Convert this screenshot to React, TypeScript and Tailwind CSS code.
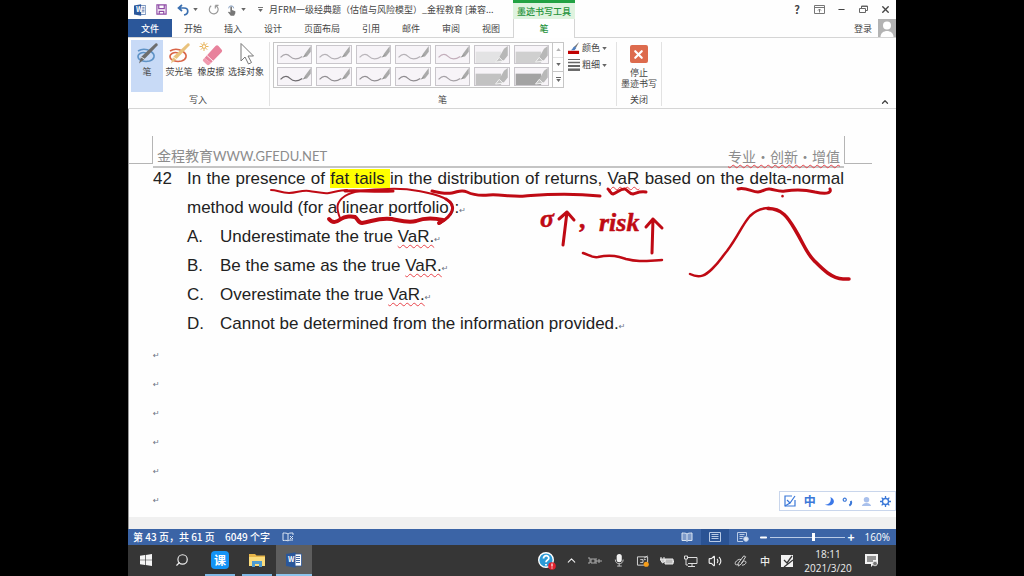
import type { ReactNode } from "react";
import { ChevronUp, Minus, Search, Settings, Volume2, X } from "lucide-react";

const tabs = ["开始", "插入", "设计", "页面布局", "引用", "邮件", "审阅", "视图"];

const options = [
  { letter: "A.", text: "Underestimate the true ", term: "VaR." },
  { letter: "B.", text: "Be the same as the true ", term: "VaR." },
  { letter: "C.", text: "Overestimate the true ", term: "VaR." },
  { letter: "D.", text: "Cannot be determined from the information provided.", term: "" },
];

// the gallery shows seven pens a row, the last two are highlighters
const pens = [
  "#a9a5aa", "#b5b1b6", "#b9b5ba", "#b5b1b6", "#c3aebb", "#e3e3e4", "#cfcfcf",
  "#6f6c70", "#918e92", "#918e92", "#8f8c90", "#a5a1a6", "#c2c2c2", "#a3a3a3",
];

function Caret() {
  return (
    <svg viewBox="0 0 6 4" className="h-[3px] w-[5px]" fill="#666">
      <path d="M0 0h6L3 4z" />
    </svg>
  );
}

function Mark() {
  return (
    <span className="font-['DejaVu_Sans'] text-[8px] leading-none text-gray-500" aria-hidden="true">
      ↵
    </span>
  );
}

function Term({ children }: { children: ReactNode }) {
  return (
    <span className="underline decoration-[#e8434a] decoration-wavy decoration-1 underline-offset-2">
      {children}
    </span>
  );
}

function WordLogo({ className }: { className: string }) {
  return (
    <span className={`relative flex items-center ${className}`}>
      <svg viewBox="0 0 16 16" className="h-full w-full">
        <path d="M8 2h7.5v12H8z" fill="#fff" stroke="#2b579a" strokeWidth=".8" />
        <path d="M10 4.5h4M10 6.5h4M10 8.5h4M10 10.5h4" stroke="#2b579a" strokeWidth=".9" />
        <path d="M0 2 9.5.3v15.4L0 14z" fill="#2b579a" />
      </svg>
      <span className="absolute left-0.5 text-[7px] leading-none font-bold text-white">W</span>
    </span>
  );
}

function PenIcon({ body, loop }: { body: string; loop: string }) {
  return (
    <svg viewBox="0 0 24 24" className="h-6 w-6" fill="none">
      <path
        d="M3 9c4-2.500 9-2 13 .5 5 3.500 3.500 8-1.500 9.500-5 1.300-11-.5-11.500-4C2.700 12 7 9.500 11 11"
        stroke={loop}
        strokeWidth="1.600"
      />
      <path d="M20.500 1.500c1.500-.7 2.700.5 2 2L9.500 17 6 15z" fill={body} />
      <path d="m6 15 3.500 2L4 21.500z" fill={body} />
      <path d="m6 15 3.500 2" stroke="#fff" strokeWidth=".7" />
    </svg>
  );
}

function PenSample({ color, marker }: { color: string; marker: boolean }) {
  return (
    <svg viewBox="0 0 34 18" className="h-full w-full" fill="none">
      {marker ? (
        <>
          <path d="M0 6h27v12H0z" fill={color} />
          <path d="m21 17 4-5 5-9 4-3v10l-4 5z" fill="#b8b8b8" />
          <path d="m21 17 4-5 4 4z" fill="#c4c4c4" stroke="#f3f3f3" />
        </>
      ) : (
        <>
          <path d="M2 12c4-4 7-4 10-1s7 4 13 0" stroke={color} strokeWidth="1.300" />
          <path d="m26 12 2-4 6-8v6l-4 5z" fill="#aaa" />
          <path d="m26 12 3-3" stroke="#888" />
        </>
      )}
    </svg>
  );
}

function TitleBar() {
  return (
    <div className="flex h-[19px] items-center text-[#444]">
      <div className="flex w-[141px] shrink-0 items-center pl-1.5">
        <WordLogo className="h-3 w-3" />
        <button aria-label="保存" className="ml-2.5">
          <svg viewBox="0 0 12 12" className="h-[11px] w-[11px]" fill="none" stroke="#8e4aa5" strokeWidth="1.300">
            <path d="M1 1h10v10H1zM3 1v4h6V1M3.500 11V8h5v3" />
          </svg>
        </button>
        <button aria-label="撤消" className="ml-2.5 flex items-center gap-1">
          <svg viewBox="0 0 12 12" className="h-3 w-3" fill="none" stroke="#3a6fb0" strokeWidth="1.700">
            <path d="M5 1 1.500 4 5 7M1.500 4H7c5 0 5 6 0 7" />
          </svg>
          <Caret />
        </button>
        <button aria-label="恢复" className="ml-2.5">
          <svg viewBox="0 0 12 12" className="h-[11px] w-[11px]" fill="none" stroke="#999" strokeWidth="1.300">
            <path d="M8 1.500A4.800 4.800 0 1 1 3.500 2M8 1.500V5M8 1.500h3.500" />
          </svg>
        </button>
        <button aria-label="触摸模式" className="ml-2 flex items-center gap-1">
          <svg viewBox="0 0 12 14" className="h-3 w-2.5" fill="#777">
            <path d="M4 4c0-2 2-2 2 0v3l4 1.500V11l-1.500 3h-4L1 9.500 2.500 9 4 10z" />
            <path d="M2 5a3 3 0 1 1 6 0" fill="none" stroke="#8ba3c4" strokeWidth="1.200" />
          </svg>
          <Caret />
        </button>
        <button aria-label="自定义" className="ml-3 flex flex-col items-center gap-px">
          <span className="h-px w-[5px] bg-[#777]" />
          <Caret />
        </button>
      </div>
      <h1 className="w-[244px] shrink-0 whitespace-nowrap">月FRM一级经典题（估值与风险模型）_金程教育 [兼容...</h1>
      <div className="flex h-full w-[62px] shrink-0 items-center justify-center border-t-[3px] border-[#22a243] bg-[#dff3df] font-medium whitespace-nowrap text-[#26923c]">
        墨迹书写工具
      </div>
      <div className="ml-auto flex *:flex *:w-[22px] *:items-center *:justify-center">
        <button aria-label="帮助" className="text-[11px] font-bold">?</button>
        <button aria-label="功能区显示选项">
          <svg viewBox="0 0 11 9" className="h-[9px] w-[11px]" fill="none" stroke="#777">
            <path d="M.5.5h10v8H.5zM.5 2.500h10M5.500 7.500V4M4 5.500 5.500 4 7 5.500" />
          </svg>
        </button>
        <button aria-label="最小化"><Minus size={9} strokeWidth={3} /></button>
        <button aria-label="还原">
          <svg viewBox="0 0 9 9" className="h-[9px] w-[9px]" fill="none" stroke="#666">
            <path d="M.5 3.500h6v4h-6zM2.500 3V1h6v4.500H7M2.500 1.500h6" />
          </svg>
        </button>
        <button aria-label="关闭"><X size={11} strokeWidth={3} /></button>
      </div>
    </div>
  );
}

function TabRow() {
  return (
    <div className="flex h-[19px] border-b border-[#d5d5d5]">
      <button className="w-11 bg-[#2b579a] font-medium text-white">文件</button>
      <nav className="ml-px flex">
        {tabs.map((tab) => (
          <button key={tab} className="px-[11px]">{tab}</button>
        ))}
      </nav>
      <button className="-mb-px ml-0.5 w-[62px] border-x border-[#d5d5d5] bg-white font-medium text-[#26923c]">笔</button>
      <button className="ml-auto flex items-center gap-1.5">
        登录
        <svg viewBox="0 0 18 18" className="h-[18px] w-[18px]">
          <path d="M0 0h18v18H0z" fill="#b3b3b3" />
          <circle cx="9" cy="6.500" r="4" fill="#fff" />
          <path d="M2.500 18c0-8 13-8 13 0z" fill="#fff" />
        </svg>
      </button>
    </div>
  );
}

function Ribbon() {
  return (
    <div className="flex h-[71px] border-b border-[#d5d5d5] pt-0.5 leading-3">
      <section className="flex w-[141px] flex-col pl-[3px]">
        <div className="flex h-[52px] *:flex *:flex-col *:items-center *:pt-0.5">
          <button className="w-8 bg-[#c8daf6]">
            <PenIcon body="#6d6d6d" loop="#5f93c6" />笔
          </button>
          <button className="w-8 whitespace-nowrap">
            <PenIcon body="#e9c27c" loop="#d96547" />荧光笔
          </button>
          <button className="w-8 whitespace-nowrap">
            <svg viewBox="0 0 24 24" className="h-6 w-6">
              <path d="m5.500 16 11-12c1-1 2-1 3 0l3 3.500c1 1 .8 1.800 0 2.700L12 21z" fill="#e8829c" />
              <path d="m5.500 16 6.500 5-1.500 1.500c-1 1-1.800 1-2.800 0L4.500 19.500c-1-1-.8-1.700 0-2.500z" fill="#f09bb0" />
              <path d="M8 13.500 14 19" stroke="#fff" strokeWidth=".9" />
              <path d="M5 0v9M.5 4.500h9M1.800 1.300l6.400 6.400M8.200 1.300 1.800 7.700" stroke="#e9b45a" />
              <circle cx="5" cy="4.500" r="1.800" fill="#fff" stroke="#e9b45a" />
            </svg>
            橡皮擦
          </button>
          <button className="w-[38px] whitespace-nowrap">
            <svg viewBox="0 0 24 24" className="h-6 w-6" fill="#fff" stroke="#777">
              <path d="M7 1.500V19l4-4 3.500 7 3-1.500L14 14h5.500z" />
            </svg>
            选择对象
          </button>
        </div>
        <p className="mt-0.5 pr-1 text-center">写入</p>
      </section>
      <section className="my-0.5 flex w-[347px] shrink-0 flex-col border-l border-[#e2e2e2] pl-[3px]">
        <div className="flex h-[50px] gap-1">
          <div className="flex h-[46px] w-[291px] border border-[#c6c6c6]">
            <div className="grid flex-1 grid-cols-7 gap-x-1 gap-y-[3px] px-[3px] py-0.5">
              {pens.map((color, i) => (
                <button
                  key={i}
                  aria-label={`笔 ${i + 1}`}
                  className="h-[19px] overflow-hidden border border-[#c9c6cb] bg-[#f7f4f8]"
                >
                  <PenSample color={color} marker={i % 7 > 4} />
                </button>
              ))}
            </div>
            <div className="grid w-[11px] grid-rows-3 divide-y divide-[#c6c6c6] border-l border-[#c6c6c6] *:flex *:flex-col *:items-center *:justify-center *:gap-px">
              <button aria-label="上一行" className="opacity-50">
                <svg viewBox="0 0 6 4" className="h-[3px] w-[5px]" fill="#666"><path d="M0 4h6L3 0z" /></svg>
              </button>
              <button aria-label="下一行"><Caret /></button>
              <button aria-label="更多"><span className="h-px w-[5px] bg-[#666]" /><Caret /></button>
            </div>
          </div>
          <div className="flex flex-col gap-[5px]">
            <button className="flex items-center gap-0.5">
              <svg viewBox="0 0 13 13" className="h-3 w-3">
                <path d="M0 9.500h12V13H0z" fill="#c00000" />
                <path d="M12 0 7 5l1.500 1.500z" fill="#777" />
                <path d="m7 4.500 2 2-2 2.500H3c2-1 2-3 4-4.500z" fill="#4f7dbc" />
              </svg>
              颜色 <Caret />
            </button>
            <button className="flex items-center gap-0.5">
              <svg viewBox="0 0 12 12" className="h-3 w-3" stroke="#666">
                <path d="M0 .5h12" />
                <path d="M0 3.500h12" strokeWidth="1.500" />
                <path d="M0 7h12" strokeWidth="2" />
                <path d="M0 10.700h12" strokeWidth="2.500" />
              </svg>
              粗细 <Caret />
            </button>
          </div>
        </div>
        <p className="mt-0.5 pr-1 text-center">笔</p>
      </section>
      <section className="my-0.5 flex w-[46px] flex-col items-center border-x border-[#e2e2e2]">
        <button className="flex h-[50px] flex-col items-center pt-[3px] leading-[11px] whitespace-nowrap">
          <span className="mb-1 flex h-[18px] w-[18px] shrink-0 items-center justify-center rounded-xs bg-[#dd6b4d] text-white">
            <X size={13} strokeWidth={4} />
          </span>
          <span>停止</span>
          <span>墨迹书写</span>
        </button>
        <p className="mt-0.5">关闭</p>
      </section>
      <button aria-label="折叠功能区" className="mt-auto mr-1.5 mb-px ml-auto">
        <ChevronUp size={10} strokeWidth={3} />
      </button>
    </div>
  );
}

function PageHeader() {
  return (
    <div className="flex pt-7">
      <div className="-mt-px h-7 w-6 border-r border-b border-[#b5b5b5]" />
      <div className="flex h-[31px] flex-1 items-end justify-between border-b-2 border-[#c4c4c4] pl-1 text-sm leading-5 text-[#8c8c8c]">
        <p>
          金程教育<span className="font-['Lato'] text-[13px]">WWW.GFEDU.NET</span>
        </p>
        <p className="mr-1">
          <Term>专业・创新・增值</Term>
        </p>
      </div>
      <div className="-mt-px h-7 w-7 border-b border-l border-[#b5b5b5]" />
      <div className="w-6" />
    </div>
  );
}

function Ink() {
  return (
    <svg
      viewBox="129 108 767 421"
      className="pointer-events-none absolute top-0 left-0 w-full"
      fill="none"
      stroke="#bf0a14"
      strokeWidth="2.500"
      strokeLinecap="round"
      strokeLinejoin="round"
    >
      <path d="M271 189c6 0 10 3 18 3s12-3 20-2 14 3 20 2 11-3 18-3" strokeWidth="2" />
      <path d="M345 190c12-1 30 1 48 0" strokeWidth="3" />
      <path d="M340 217c-4-10-4-16 5-22s22-6 43-7c22-1 45 4 56 9 14 7 9 18-4 25" strokeWidth="2" />
      <path d="M446 198c12 7 6 17-6 24" strokeWidth="3" />
      <path d="M329 218c4 5 8 3 12 0s11-3 14-2c3 2 3 6 7 6 9-1 17-6 30-4 10 2 16 4 24 2 10-4 18-3 27-1l-4 3" strokeWidth="4" />
      <path d="M432 190c8 2 14 3 20 2s9-4 15-1 12 4 22 3 22 2 36 1 38-4 75 0" strokeWidth="3" />
      <path d="M608 188c2 2 3 5 5 5 4-1 8-6 12-5 4 2 4 5 8 5 4-1 6-3 13-2" strokeWidth="3" />
      <path d="M738 188c8-2 14 3 20 3 5 0 7-4 12-3 6 1 9 3 15 2 12-2 22-1 30 1 9 2 17 2 15-3" strokeWidth="3" />
      <path d="M782.500 195v.3" />
      <path d="M690 273c10 5 16 1 22-5 9-9 9-11 15-18 12-16 15-26 23-35 6-6 12-8 19-8" />
      <path d="M768 207.500c14 0 20 9 27 21 9 15 11 23 19 31 7 7 17 18 29 18.500h6" strokeWidth="3.500" />
      <path d="m563 244 4-33M559 218l8-7 7 8" strokeWidth="3" />
      <path d="m652 252 1-34M646 226l7-8 9 9" strokeWidth="3" />
      <path d="M583 252c6 2 9 5 15 4 14-3 22 0 28 2 12 3 18 2 36 1" />
      <g
        fill="#bf0a14"
        strokeWidth=".5"
        className="font-['Liberation_Serif'] text-[26px] font-bold italic"
      >
        <text x="540" y="226">σ</text>
        <text x="580" y="227">,</text>
        <text x="599" y="230">risk</text>
      </g>
    </svg>
  );
}

function ImeBar() {
  return (
    <div className="absolute right-0 bottom-[18px] flex h-5 w-[117px] items-center justify-around border border-[#c9d6ec] bg-white text-[#3b78d8]">
      <button aria-label="输入法">
        <svg viewBox="0 0 12 12" className="h-3 w-3" fill="none" stroke="#3b78d8" strokeWidth="1.200">
          <path d="M8 1H1v10h10V5" />
          <path d="m3 5 3 3 5-7M1 11l5-3" />
        </svg>
      </button>
      <button className="text-[12px] leading-none font-bold">中</button>
      <button aria-label="半角">
        <svg viewBox="0 0 12 12" className="h-[11px] w-[11px]" fill="#3b78e8">
          <path d="M7 1c7 3 4 12-6 8.500 5 0 7.500-4 6-8.500z" />
        </svg>
      </button>
      <button aria-label="标点">
        <svg viewBox="0 0 12 12" className="h-[11px] w-[11px]" fill="none" stroke="#3b78d8">
          <circle cx="3" cy="4" r="1.700" strokeWidth="1.300" />
          <path d="M9.500 5.500c1 2 0 4-1.500 5" strokeWidth="2.200" />
        </svg>
      </button>
      <button aria-label="账户">
        <svg viewBox="0 0 12 12" className="h-[11px] w-[11px]" fill="#a9c0ec">
          <circle cx="6" cy="4" r="3" />
          <path d="M1 11c0-2 2-3.500 5-3.500s5 1.500 5 3.500z" />
        </svg>
      </button>
      <button aria-label="设置">
        <svg viewBox="0 0 12 12" className="h-[11px] w-[11px]" fill="none" stroke="#3b78d8">
          <circle cx="6" cy="6" r="3.300" strokeWidth="1.500" />
          <path d="M6 0v2.500M6 9.500V12M0 6h2.500M9.500 6H12M1.800 1.800l1.700 1.700M8.500 8.500l1.700 1.700M10.200 1.800 8.500 3.500M3.500 8.500l-1.700 1.700" strokeWidth="1.400" />
        </svg>
      </button>
    </div>
  );
}

function StatusBar() {
  return (
    <footer className="flex h-4 shrink-0 items-center bg-[#3b64a6] pl-[5px] text-[10px] font-medium text-white">
      <span className="w-[92px] whitespace-nowrap">第 43 页，共 61 页</span>
      <span className="w-[57px] whitespace-nowrap">6049 个字</span>
      <svg viewBox="0 0 12 10" className="h-2.5 w-3" fill="none" stroke="#dbe5f3">
        <path d="M6 9V2C5 1 3 1 1 1v7.500c2 0 4-.5 5 .5 1-1 2-1 5-1M6 2c1-1 2-1 5-1v2M8 4l3 3M11 4 8 7" />
      </svg>
      <div className="ml-auto flex h-full *:flex *:h-full *:w-7 *:items-center *:justify-center">
        <button aria-label="阅读视图">
          <svg viewBox="0 0 12 10" className="h-2.5 w-3" fill="#7f9bc9" stroke="#dbe5f3">
            <path d="M6 9V2C5 1 3 1 1 1v7.500h4L6 9.500l1-1h4V1C9 1 7 1 6 2" />
          </svg>
        </button>
        <button aria-label="页面视图" className="bg-[#2a5394]">
          <svg viewBox="0 0 12 10" className="h-2.5 w-3" fill="none" stroke="#b9cbe6">
            <path d="M.5.5h11v9H.5zM2.500 2.500h7M2.500 4.500h7M2.500 6.500h7" />
          </svg>
        </button>
        <button aria-label="Web 版式视图">
          <svg viewBox="0 0 12 10" className="h-2.5 w-3" fill="none" stroke="#b9cbe6">
            <path d="M6 9.500H.5v-9h9V4M2.500 2.500h5M2.500 4.500h4M2.500 6.500h3" />
            <circle cx="9" cy="7" r="2.300" fill="#dbe5f3" />
          </svg>
        </button>
      </div>
      <button aria-label="缩小" className="ml-0.5"><Minus size={9} strokeWidth={5} /></button>
      <input
        type="range"
        aria-label="缩放"
        min={0}
        max={100}
        defaultValue={58}
        className="mx-0.5 h-2 w-[75px] appearance-none bg-[linear-gradient(#b9cbe6,#b9cbe6)] bg-[length:100%_1px] bg-center bg-no-repeat [&::-webkit-slider-thumb]:h-2 [&::-webkit-slider-thumb]:w-[3px] [&::-webkit-slider-thumb]:appearance-none [&::-webkit-slider-thumb]:bg-white"
      />
      <button aria-label="放大" className="text-[12px] leading-none font-bold">+</button>
      <span className="mr-1.5 ml-2.5 font-['Open_Sans'] font-normal">160%</span>
    </footer>
  );
}

function Taskbar() {
  return (
    <div className="flex h-[31px] shrink-0 items-center bg-[#363636] text-[#eee]">
      <div className="flex h-full *:flex *:h-full *:w-9 *:items-center *:justify-center *:border-b-2 *:border-transparent">
        <button aria-label="开始菜单">
          <svg viewBox="0 0 12 12" className="h-3 w-3" fill="#f4f4f4">
            <path d="m0 1.700 5-.7v4.700H0zM5.700.9 12 0v5.700H5.700zM0 6.300h5V11l-5-.7zM5.700 6.300H12V12l-6.300-.9z" />
          </svg>
        </button>
        <button aria-label="搜索"><Search size={14} strokeWidth={2} className="-scale-x-100" /></button>
        <button className="mr-1 ml-[5px] w-[30px]! border-[#7fb8e4]!">
          <span className="flex h-[18px] w-[18px] items-center justify-center rounded-sm bg-[#1493f5] text-[12px] leading-none font-bold text-white">课</span>
        </button>
        <button aria-label="文件资源管理器" className="mr-1 ml-[3px] w-[30px]! border-[#7fb8e4]!">
          <svg viewBox="0 0 16 14" className="h-3.5 w-4">
            <path d="M0 1h6l1.500 1.500H16V13H0z" fill="#e8b64a" />
            <path d="M0 4h16v9H0z" fill="#fbdc7c" />
            <path d="M3 14V8h10v6h-3v-3H6v3z" fill="#4f9cd0" />
          </svg>
        </button>
        <button aria-label="Word" className="border-[#8cc4ec]! bg-[#5e5e5e]">
          <WordLogo className="h-4 w-4" />
        </button>
      </div>
      <div className="ml-auto flex items-center *:flex *:w-6 *:items-center *:justify-center">
        <button aria-label="帮助">
          <svg viewBox="0 0 18 18" className="h-[18px] w-[18px] shrink-0">
            <circle cx="8" cy="8" r="7.300" fill="#2b9ad6" stroke="#fff" strokeWidth="1.400" />
            <path d="M5.500 6.500c0-4 5.500-3.500 5.300-.3C10.700 8 8 8 8 10.300M8 12v1.500" fill="none" stroke="#fff" strokeWidth="1.800" />
            <circle cx="14" cy="14" r="3.800" fill="#e0202c" />
            <path d="M14 11.500v3M14 15.500v1" stroke="#fff" strokeWidth="1.200" />
          </svg>
        </button>
        <button aria-label="显示隐藏的图标"><ChevronUp size={13} /></button>
        <button aria-label="电源">
          <svg viewBox="0 0 14 8" className="h-2 w-3.5" fill="none" stroke="#aaa">
            <path d="M0 1h2v5H0M3 2h4v4H3zM8 1v6M8 4h6M11 2v4" />
          </svg>
        </button>
        <button aria-label="麦克风">
          <svg viewBox="0 0 10 14" className="h-[13px] w-2.5" fill="#f0f0f0">
            <rect x="2.500" y="0" width="5.500" height="9" rx="2.700" />
            <path d="M1 6c0 6 8.500 6 8.500 0M5.200 10v3M3 13h5" fill="none" stroke="#ccc" />
          </svg>
        </button>
        <button aria-label="安全">
          <svg viewBox="0 0 14 13" className="h-3 w-3.5" fill="none" stroke="#ddd">
            <path d="M8 11H1V2h11v6M4 5h3v3H4M8 3.500 12 1M8 5h2" />
            <circle cx="10.500" cy="10" r="2.800" fill="#f59d1a" stroke="none" />
          </svg>
        </button>
        <button aria-label="电池">
          <svg viewBox="0 0 14 10" className="h-2.5 w-3.5" fill="#ccc">
            <path d="M5 3h8v5H5z" fill="#bbb" stroke="#eee" />
            <path d="M13.500 4.500v2M1 1v2M4 1v2M0 3h5v2L2.500 7z" stroke="#eee" />
          </svg>
        </button>
        <button aria-label="网络">
          <svg viewBox="0 0 14 12" className="h-3 w-3.5" fill="none" stroke="#ddd">
            <path d="M4 2.500h9v6H4M4 11.500h7M8 8.500v3M.5 1h3v3h-3zM2 4v6h2" />
          </svg>
        </button>
        <button aria-label="音量"><Volume2 size={14} strokeWidth={2} /></button>
        <button aria-label="手写笔" className="ml-0.5">
          <svg viewBox="0 0 14 14" className="h-[13px] w-3.5" fill="none" stroke="#ddd">
            <path d="m4 10 6-8 2 1-5 8-3 2zM1 9c1-2 4-4 6-3M8 12c4 0 5-3 4-4s-4 0-4 2M1 9c-1 3 1 3 3 2" />
          </svg>
        </button>
        <button className="text-[10px] leading-none font-medium">中</button>
        <button aria-label="输入法" className="w-5!">
          <svg viewBox="0 0 12 12" className="h-3 w-3">
            <path d="M0 0h12v12H0z" fill="#f2f2f2" />
            <path d="m3 5 3 3 5-7M3 12l9-7" fill="none" stroke="#363636" strokeWidth="1.300" />
          </svg>
        </button>
      </div>
      <button className="mx-2 flex w-[46px] flex-col items-center font-['Open_Sans'] text-[10px] leading-[14px]">
        <span>18:11</span>
        <span>2021/3/20</span>
      </button>
      <button aria-label="通知" className="mr-[18px] ml-1.5">
        <svg viewBox="0 0 13 13" className="h-[13px] w-[13px]">
          <path d="M0 0h13v10H9l-3 3v-3H0z" fill="#f2f2f2" />
          <path d="M2 3h9M2 5h9M2 7h6" stroke="#363636" />
          <circle cx="10" cy="9.500" r="2.300" fill="#777" stroke="#eee" strokeWidth=".8" />
        </svg>
      </button>
    </div>
  );
}

export default function App() {
  return (
    <main className="h-screen bg-black">
      <div className="mx-auto flex h-full w-3/4 flex-col overflow-hidden bg-[#fefefe] font-['Noto_Sans_CJK_SC',sans-serif] text-[9px] leading-none text-[#444]">
        <header className="shrink-0">
          <TitleBar />
          <TabRow />
          <Ribbon />
        </header>

        <article className="relative min-h-0 flex-1 overflow-hidden border-l border-[#999] text-[#222]">
          <PageHeader />
          <div className="-mt-1 pr-[52px] pl-6 font-['Liberation_Sans'] text-[17px] leading-[29px]">
            <div className="flex">
              <span className="w-[34px] shrink-0">42</span>
              <p className="text-justify">
                In the presence of <mark className="bg-[#ffff00] text-inherit">fat tails </mark>in the distribution of
                returns, <Term>VaR</Term> based on the delta-normal method would (for a linear portfolio):
                <Mark />
              </p>
            </div>
            <ol className="pl-[34px]">
              {options.map((option) => (
                <li key={option.letter} className="flex">
                  <span className="w-[33px] shrink-0">{option.letter}</span>
                  <p>
                    {option.text}
                    {option.term && <Term>{option.term}</Term>}
                    <Mark />
                  </p>
                </li>
              ))}
            </ol>
            {[1, 2, 3, 4, 5, 6].map((line) => (
              <p key={line}><Mark /></p>
            ))}
          </div>
          <div className="absolute inset-x-0 bottom-0 h-3 bg-[#f0f0f0]" />
          <Ink />
          <ImeBar />
        </article>

        <StatusBar />
        <Taskbar />
      </div>
    </main>
  );
}
